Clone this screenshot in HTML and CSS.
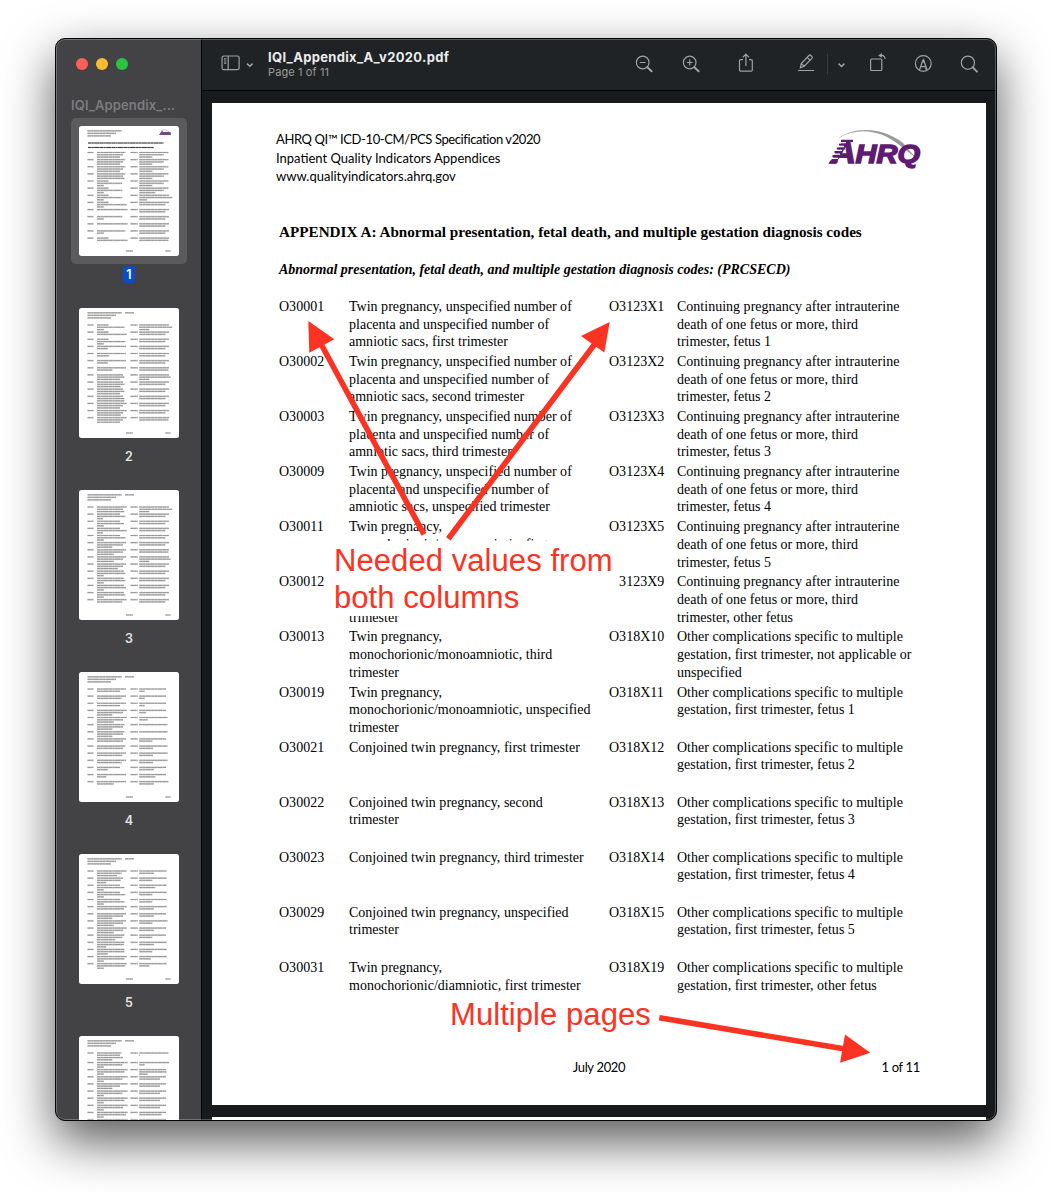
FILE: index.html
```html
<!DOCTYPE html>
<html lang="en">
<head>
<meta charset="utf-8">
<title>IQI_Appendix_A_v2020.pdf</title>
<link rel="stylesheet" href="styles.css">
</head>
<body>
<div class="window">
  <aside class="sidebar">
    <div class="lights"><i class="red"></i><i class="yellow"></i><i class="green"></i></div>
    <div class="side-title">IQI_Appendix_...</div>
    <div class="thumbs" id="thumbs"></div>
  </aside>
  <main class="viewer">
    <header class="toolbar">
      <svg class="i-side" width="20" height="16" viewBox="0 0 20 16"><rect x="1.1" y="1" width="17" height="13.6" rx="1.6"/><path d="M7.2 1v13.6M3 3.8h2.4M3 6h2.4M3 8.2h2.4"/></svg>
      <svg class="i-chev" width="11" height="24" viewBox="0 0 11 24"><path class="heavy" d="M3 12.6l2.8 2.7 2.8-2.7"/></svg>
      <div class="doc"><div class="doc-name">IQI_Appendix_A_v2020.pdf</div><div class="doc-page">Page 1 of 11</div></div>
      <svg class="ic" viewBox="0 0 24 24"><circle cx="10.7" cy="11.5" r="6.3"/><path d="M7.8 11.5h5.8"/><path class="handle" d="M15.4 16.2l4.2 4.1"/></svg>
      <svg class="ic g23" viewBox="0 0 24 24"><circle cx="10.7" cy="11.5" r="6.3"/><path d="M7.8 11.5h5.8M10.7 8.6v5.8"/><path class="handle" d="M15.4 16.2l4.2 4.1"/></svg>
      <svg class="ic g31" viewBox="0 0 24 24"><path d="M9 8.6H6.6a1.1 1.1 0 0 0-1.1 1.1v9.4a1.1 1.1 0 0 0 1.1 1.1h10.6a1.1 1.1 0 0 0 1.1-1.1V9.7a1.1 1.1 0 0 0-1.1-1.1H15M11.9 15V3.4M8.7 6.4l3.2-3.2 3.2 3.2"/></svg>
      <svg class="ic g36" viewBox="0 0 24 24"><path d="M4 19.5h16M6.300 16.800l1-4.200 7.600-8.100q1-1 2 0l1 1q.9.900 0 1.900l-7.700 7.800zM13.200 6.300l3 3M7.300 12.600l2.900 2.600"/></svg>
      <i class="sep"></i>
      <svg class="chev2" width="11" height="24" viewBox="0 0 11 24"><path class="heavy" d="M2.6 12.600l2.900 2.900 2.900-2.900"/></svg>
      <svg class="ic g18" viewBox="0 0 24 24"><rect x="5.600" y="8" width="11.200" height="11.500" rx="1"/><path d="M15.500 4.400h1.300q3 .2 3.200 3.600"/><path class="fill" d="M13.200 4.400l3.600-2.400v4.800z"/></svg>
      <svg class="ic g22" viewBox="0 0 24 24"><circle cx="12.300" cy="12.500" r="7.900"/><path d="M8.500 19l3.300-9.600h1l3.300 9.600M9.700 15.700h5.200v3"/><path class="fill" d="M12.300 7l1.500 4.500h-3z"/></svg>
      <svg class="ic g22" viewBox="0 0 24 24"><circle cx="10.900" cy="11.700" r="6.600"/><path class="handle" d="M15.800 16.400l4.200 4.200"/></svg>
    </header>
    <section class="canvas">
      <article class="page">
        <div class="masthead">
          <div class="org">
            <div class="spec">AHRQ QI™ ICD-10-CM/PCS Specification v2020</div>
            <div>Inpatient Quality Indicators Appendices</div>
            <div>www.qualityindicators.ahrq.gov</div>
          </div>
          <svg class="logo" width="96" height="40" viewBox="0 0 96 40">
            <path class="arc" d="M11 10.500C26-1 54-2 76 15l13 15-16-12.500C53 1 30-1 11 10.500z"/>
            <text class="lt" x="4" y="35" font-size="31.500" textLength="25" lengthAdjust="spacingAndGlyphs">A</text>
            <text class="lt" x="28.500" y="35" font-size="25" textLength="64.500" lengthAdjust="spacingAndGlyphs">HRQ</text>
            <path class="slash" d="M1.500 35.500h8.500l1.200-3H3.500z"/>
            <path class="bars" d="M14 12.800h12M12 16.600h8M9.800 20.400h8M7.500 24.200h8M5.500 28h10"/>
            <path class="gaps" d="M12 14.700h7M10 18.500h7M8 22.300h7M6 26.100h7M4 30.400h7"/>
          </svg>
        </div>
        <h1>APPENDIX A: Abnormal presentation, fetal death, and multiple gestation diagnosis codes</h1>
        <h2>Abnormal presentation, fetal death, and multiple gestation diagnosis codes: (PRCSECD)</h2>
        <div class="codes">
          <div class="row"><b>O30001</b><p>Twin pregnancy, unspecified number of<br>placenta and unspecified number of<br>amniotic sacs, first trimester</p><b>O3123X1</b><p>Continuing pregnancy after intrauterine<br>death of one fetus or more, third<br>trimester, fetus 1</p></div>
          <div class="row"><b>O30002</b><p>Twin pregnancy, unspecified number of<br>placenta and unspecified number of<br>amniotic sacs, second trimester</p><b>O3123X2</b><p>Continuing pregnancy after intrauterine<br>death of one fetus or more, third<br>trimester, fetus 2</p></div>
          <div class="row"><b>O30003</b><p>Twin pregnancy, unspecified number of<br>placenta and unspecified number of<br>amniotic sacs, third trimester</p><b>O3123X3</b><p>Continuing pregnancy after intrauterine<br>death of one fetus or more, third<br>trimester, fetus 3</p></div>
          <div class="row"><b>O30009</b><p>Twin pregnancy, unspecified number of<br>placenta and unspecified number of<br>amniotic sacs, unspecified trimester</p><b>O3123X4</b><p>Continuing pregnancy after intrauterine<br>death of one fetus or more, third<br>trimester, fetus 4</p></div>
          <div class="row"><b>O30011</b><p>Twin pregnancy,<br>monochorionic/monoamniotic, first</p><b>O3123X5</b><p>Continuing pregnancy after intrauterine<br>death of one fetus or more, third<br>trimester, fetus 5</p></div>
          <div class="row"><b>O30012</b><p><br><br>trimester</p><b>O3123X9</b><p>Continuing pregnancy after intrauterine<br>death of one fetus or more, third<br>trimester, other fetus</p></div>
          <div class="row"><b>O30013</b><p>Twin pregnancy,<br>monochorionic/monoamniotic, third<br>trimester</p><b>O318X10</b><p>Other complications specific to multiple<br>gestation, first trimester, not applicable or<br>unspecified</p></div>
          <div class="row"><b>O30019</b><p>Twin pregnancy,<br>monochorionic/monoamniotic, unspecified<br>trimester</p><b>O318X11</b><p>Other complications specific to multiple<br>gestation, first trimester, fetus 1</p></div>
          <div class="row"><b>O30021</b><p>Conjoined twin pregnancy, first trimester</p><b>O318X12</b><p>Other complications specific to multiple<br>gestation, first trimester, fetus 2</p></div>
          <div class="row"><b>O30022</b><p>Conjoined twin pregnancy, second<br>trimester</p><b>O318X13</b><p>Other complications specific to multiple<br>gestation, first trimester, fetus 3</p></div>
          <div class="row"><b>O30023</b><p>Conjoined twin pregnancy, third trimester</p><b>O318X14</b><p>Other complications specific to multiple<br>gestation, first trimester, fetus 4</p></div>
          <div class="row"><b>O30029</b><p>Conjoined twin pregnancy, unspecified<br>trimester</p><b>O318X15</b><p>Other complications specific to multiple<br>gestation, first trimester, fetus 5</p></div>
          <div class="row"><b>O30031</b><p>Twin pregnancy,<br>monochorionic/diamniotic, first trimester</p><b>O318X19</b><p>Other complications specific to multiple<br>gestation, first trimester, other fetus</p></div>
        </div>
        <footer class="foot"><span></span><span>July 2020</span><span class="pn">1 of 11</span></footer>
        <div class="note note-cols">Needed values from<br>both columns</div>
        <div class="note note-pages">Multiple pages</div>
        <svg class="arrows" width="774" height="1002" viewBox="212 103 774 1002">
          <path d="M321 344L424 534.300M595.500 343L448.300 538.700M659.300 1017.700L845 1049"/>
          <polygon points="308.300,321 334.300,339.300 309.300,352.700"/>
          <polygon points="609.700,322 581,336 604.300,352.500"/>
          <polygon points="870.300,1052.800 845,1034.600 840,1062.700"/>
        </svg>
      </article>
      <div class="next-page"></div>
    </section>
  </main>
</div>
<script src="thumbs.js"></script>
</body>
</html>
```
FILE: styles.css
```css
* { box-sizing: border-box; }
body { margin: 0; width: 1052px; height: 1194px; overflow: hidden; background: #fff; font-family: Inter, sans-serif; }

.window {
  display: grid; grid-template-columns: 146px 1fr;
  width: 942px; height: 1083px; margin: 38px 0 0 55px;
  border: 1px solid #050505; border-radius: 10px; overflow: hidden;
  background: #171b1d;
  box-shadow: 0 20px 50px rgba(0,0,0,.66);
  position: relative;
}
.window::after {
  content: ""; position: absolute; inset: 0; border-radius: 9px;
  border: 1px solid rgba(255,255,255,.26); pointer-events: none;
}

.sidebar { background: #434345; border-right: 1px solid #000; overflow: hidden; height: 1081px; }
.lights { display: flex; gap: 8px; padding: 19px 0 0 20px; }
.lights i { width: 12px; height: 12px; border-radius: 50%; }
.red { background: #ff5f57; }
.yellow { background: #febb30; }
.green { background: #2ac440; }
.side-title { margin: 26px 0 0 15px; font-size: 13px; line-height: 18px; height: 22px; font-weight: 600; color: #7c7c7e; letter-spacing: .12px; }
.thumbs { padding-left: 15px; }
.thumb { width: 116px; height: 182px; }
.thumb-box { width: 116px; height: 146px; padding: 8px; border-radius: 5px; }
.thumb.on .thumb-box { background: #5b5b5d; }
.thumb svg { display: block; width: 100px; height: 130px; border-radius: 2.5px; background: #fff; }
.thumb path { fill: none; }
.thumb .soft { stroke: #d2d2d2; stroke-width: 1.7; }
.thumb .ink { stroke: #8c8c8c; stroke-width: .9; }
.thumb .ink.strong { stroke: #3c3c3c; stroke-width: 1.1; }
.thumb .mini-arc { stroke: #aaa; stroke-width: .7; }
.thumb .mini-logo { fill: #7a4388; stroke: none; }
.num { width: 12px; height: 17px; margin: 2px auto 0; border-radius: 2.5px; text-align: center; font-size: 12.5px; line-height: 17px; font-weight: 600; color: #e4e4e5; }
.on .num { background: #0b4cc9; color: #fff; }

.viewer { display: grid; grid-template-rows: 52px 1fr; height: 1081px; min-width: 0; }
.toolbar { display: flex; align-items: flex-start; padding: 12px 15px 0 19px; background: #1f2325; border-bottom: 1px solid #000; }
.toolbar svg { fill: none; stroke: #a0a2a3; stroke-width: 1.2; flex: none; }
.toolbar .heavy { stroke-width: 1.5; }
.toolbar .handle { stroke-width: 2; stroke-linecap: round; }
.toolbar .fill { fill: #a0a2a3; stroke: none; }
.i-side { margin-top: 4px; }
.i-chev { margin-left: 3px; }
.doc { margin: -3px auto 0 13px; width: 190px; }
.doc-name { font-size: 13px; line-height: 18px; font-weight: 700; color: #ececec; white-space: nowrap; letter-spacing: .33px; }
.doc-page { font-size: 11px; line-height: 13px; color: #9b9d9e; letter-spacing: .12px; }
.ic { width: 24px; height: 24px; }
.g23 { margin-left: 23px; } .g31 { margin-left: 31px; } .g36 { margin-left: 36px; }
.g18 { margin-left: 18px; } .g22 { margin-left: 22px; }
.sep { width: 1px; height: 20px; margin: 3px 8px 0 9px; background: #393d3f; }

.canvas { padding: 12px 10px 0; overflow: hidden; }
.page { position: relative; width: 774px; height: 1002px; background: #fff; color: #000; overflow: hidden; white-space: nowrap; }
.next-page { width: 774px; height: 20px; margin-top: 12px; background: #fff; }
.masthead { display: flex; justify-content: space-between; height: 119px; padding: 27px 63px 0 64px; }
.org { font: 13px/18.5px Lato, sans-serif; }
.spec { letter-spacing: -.4px; }
.logo { margin-top: -2px; overflow: visible; }
.logo .arc { fill: #999; }
.logo .lt { font-family: "Liberation Sans", sans-serif; font-weight: 700; font-style: italic; fill: #5f1a72; stroke: #5f1a72; stroke-width: 1.4; }
.logo .slash { fill: #5f1a72; }
.logo .bars { stroke: #5f1a72; stroke-width: 2.2; }
.logo .gaps { stroke: #fff; stroke-width: 1.3; }
h1, h2, .codes { font-family: "Liberation Serif", serif; margin: 0 0 0 67px; }
h1 { font-size: 15.2px; line-height: 20px; height: 38px; }
h2 { font-size: 14px; line-height: 20px; height: 38px; font-style: italic; }
.row { display: grid; grid-template-columns: 70px 260px 68px 1fr; height: 55.08px; font-size: 14px; line-height: 17.6px; letter-spacing: .01px; }
.row b { font-weight: 400; }
.row p { margin: 0; }
.foot { display: grid; grid-template-columns: 1fr 1fr 1fr; margin: 44px 66px 0; font: 13px/18px Lato, sans-serif; letter-spacing: -.33px; }
.foot > * { justify-self: center; }
.foot .pn { justify-self: end; }
.note { position: absolute; color: #fc3222; background: #fff; font: 31px/37px "Liberation Sans", sans-serif; letter-spacing: .07px; }
.note-cols { left: 112px; top: 438px; width: 295px; height: 75px; padding: 1px 0 0 10px; }
.note-pages { left: 238px; top: 893px; }
.arrows { position: absolute; left: 0; top: 0; fill: #fc3222; }
.arrows path { stroke: #fc3222; stroke-width: 5.6; }
```
FILE: thumbs.js
```js
// Greeked page previews: each entry is [left column line lengths, right column line lengths] in characters.
const twin = [37, 34, 30], cont = [39, 33, 18], mono = [15, 33, 9], other = [40, 35];
const pages = [
  [[twin, cont], [twin, cont], [twin, cont], [[37, 34, 36], cont], [mono, cont], [mono, [39, 33, 22]], [mono, [40, 44, 11]],
   [[15, 39, 9], other], [[40], other], [[33, 9], other], [[40], other], [[37, 9], other], [[15, 40], [40, 39]]],
  [[[15, 36, 9], [40, 44, 14]], [[15, 39], other], [[15, 37, 9], other], [[38, 14], other], [[38, 16], other], [[38, 14], other], [[38, 20], [40, 39]],
   [[34, 36, 30], [40, 42, 14]], [[34, 36, 31], other], [[34, 36, 30], other], [[34, 36, 36], other], [[39, 34, 30], other], [[39, 34, 31], other], [[39, 34, 30], [40, 39]]],
  [[[39, 34, 36], [40, 44, 14]], [[30, 37, 8], other], [[30, 35, 9], other], [[30, 39, 8], other], [[30, 37, 9], other], [[38, 34, 20], other], [[38, 34, 22], [40, 39]],
   [[38, 34, 22], [40, 42, 14]], [[38, 34, 27], other], [[35, 37, 9], other], [[35, 37, 9], other], [[35, 38, 9], other], [[35, 37, 9], other], [[39, 33], other]],
  [[[38, 30], [36, 8]], [[38, 32], [36, 8]], [[38, 30], [36, 8]], [[39, 34, 20], [36, 10]], [[39, 34, 22], [38, 12]], [[36, 34, 20], [38]], [[36, 34, 20], [38]],
   [[38, 34], [36, 18]], [[37, 34], [38, 19]], [[38, 33], [38, 19]], [[38, 32], [38, 19]], [[30, 14], [36, 20]], [[38, 12], [36, 22]], [[38, 22], [39, 20]]],
  [[[39, 32, 26], [37, 20]], [[34, 31, 12], [37, 18]], [[30, 36, 9], [37, 22]], [[30, 37, 9], [37, 18]], [[30, 36, 9], [37, 18]], [[39, 35], [37, 20]], [[38, 34, 20], [36, 20]],
   [[38, 34, 22], [38, 18]], [[39, 34, 22], [36, 20]], [[36, 33, 24], [36, 18]], [[36, 35, 12], [37, 20]], [[36, 36, 14], [37, 18]], [[39, 36, 9], [37, 16]], [[39, 37, 9], [37, 14]]],
  [[[32, 30, 34, 20], [39, 2]], [[40, 33, 9], [40, 8]], [[40, 36, 9], [36, 37, 12]], [[40, 33, 9], [36, 28]], [[40, 30, 20], [36, 28]], [[40, 33, 9], [36, 28]], [[40, 36, 9], [36, 28]],
   [[40, 34, 9], [36, 28]], [[40, 38, 9], [36, 30]], [[40, 33, 9], [36, 28]]]
];
const CHAR = 0.765, LINE = 2.27, PITCH = 7.13;
const dash = 'stroke-dasharray="3.4 .35 2.1 .35 5.3 .35"';

function stroke(d, strong) {
  return `<path class="soft" d="${d}"/><path class="ink${strong ? ' strong' : ''}" ${dash} d="${d}"/>`;
}

function drawPage(rows, index) {
  const first = index === 0;
  let light = 'M8.5 4.8h34M8.5 7.3h28.5M8.5 9.9h23.5';
  if (!first) light += 'M46 4.8h9';
  let y = first ? 26.5 : 17;
  for (const [left, right] of rows) {
    light += `M8.5 ${y}h6M51.5 ${y}h7.2`;
    left.forEach((n, i) => { light += `M18 ${y + i * LINE}h${n * CHAR}`; });
    right.forEach((n, i) => { light += `M60.3 ${y + i * LINE}h${n * CHAR - .8}`; });
    y += PITCH + (left.length > 3 ? 2.4 : 0);
  }
  light += 'M47 125h7M86.5 125h5';
  let svg = stroke(light, false);
  if (first) {
    svg += stroke('M9 17h75.5M9 21.5h66', true);
    svg += '<path class="mini-arc" d="M82 5q5-3 9 2"/><path class="mini-logo" d="M80 9l2.5-3.8 1.6 0v.8h7.4l.5 3z"/>';
  }
  return `<svg viewBox="0 0 100 130">${svg}</svg>`;
}

document.getElementById('thumbs').innerHTML = pages.map((rows, i) =>
  `<div class="thumb${i ? '' : ' on'}"><div class="thumb-box">${drawPage(rows, i)}</div><div class="num">${i < 5 ? i + 1 : ''}</div></div>`).join('');
```
